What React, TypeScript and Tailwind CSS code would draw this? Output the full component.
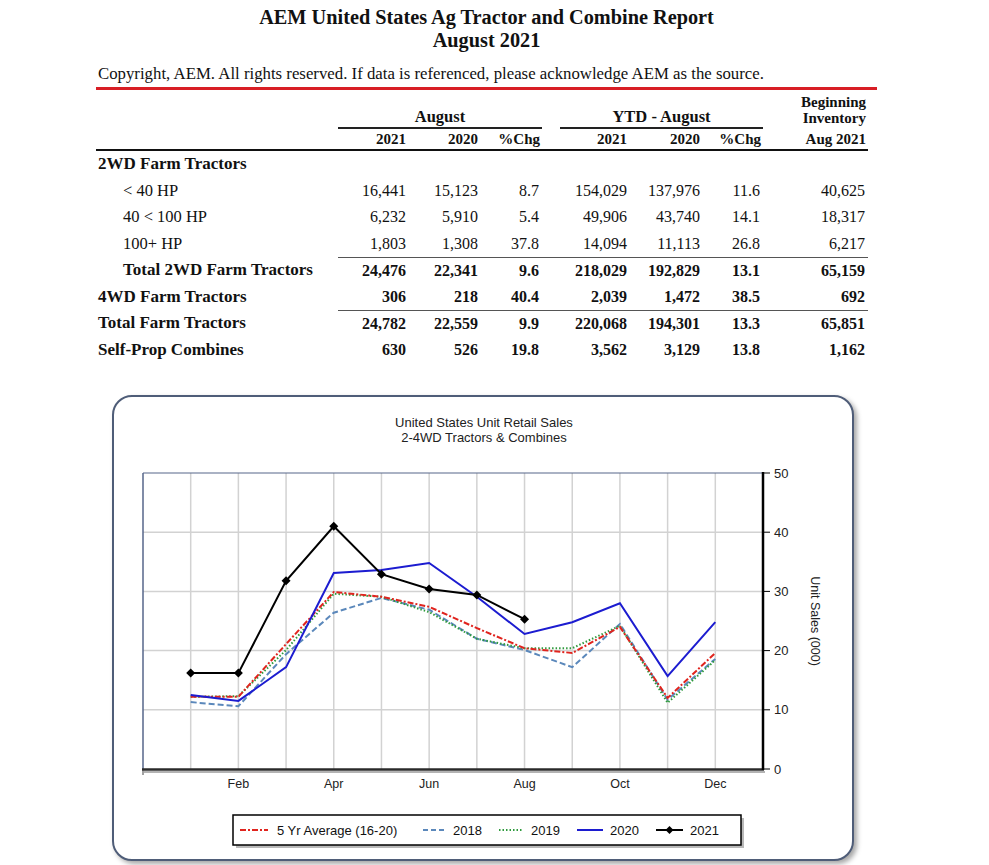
import React from "react"

const serif = { fontFamily: '"Liberation Serif", "Times New Roman", serif' }
const sans = '"Liberation Sans", Arial, sans-serif'

type Row = { label: string; indent?: boolean; bold?: boolean; vals?: string[]; lineTop?: boolean }

const ROWS: Row[] = [
  { label: "2WD Farm Tractors", bold: true },
  { label: "< 40 HP", indent: true, vals: ["16,441", "15,123", "8.7", "154,029", "137,976", "11.6", "40,625"] },
  { label: "40 < 100 HP", indent: true, vals: ["6,232", "5,910", "5.4", "49,906", "43,740", "14.1", "18,317"] },
  { label: "100+ HP", indent: true, vals: ["1,803", "1,308", "37.8", "14,094", "11,113", "26.8", "6,217"] },
  { label: "Total 2WD Farm Tractors", indent: true, bold: true, lineTop: true, vals: ["24,476", "22,341", "9.6", "218,029", "192,829", "13.1", "65,159"] },
  { label: "4WD Farm Tractors", bold: true, vals: ["306", "218", "40.4", "2,039", "1,472", "38.5", "692"] },
  { label: "Total Farm Tractors", bold: true, lineTop: true, vals: ["24,782", "22,559", "9.9", "220,068", "194,301", "13.3", "65,851"] },
  { label: "Self-Prop Combines", bold: true, vals: ["630", "526", "19.8", "3,562", "3,129", "13.8", "1,162"] },
]

const GRID = "grid grid-cols-[242px_68px_72px_64px_18px_67px_73px_63px_105px]"

const SERIES = {
  avg: [12.2, 12.2, 21.1, 29.9, 29.1, 27.4, 23.8, 20.4, 19.6, 24.0, 12.0, 19.6],
  y2018: [11.3, 10.6, 19.4, 26.4, 28.9, 26.9, 22.0, 20.1, 17.2, 24.5, 11.7, 18.6],
  y2019: [12.2, 12.3, 20.1, 29.6, 29.1, 26.5, 22.0, 20.4, 20.4, 24.2, 11.2, 18.4],
  y2020: [12.5, 11.5, 17.2, 33.1, 33.6, 34.8, 29.1, 22.8, 24.8, 28.0, 15.7, 24.8],
  y2021: [16.2, 16.2, 31.8, 41.0, 32.9, 30.4, 29.4, 25.3],
}

const X = (m: number) => 143 + m * (620 / 13)
const Y = (v: number) => 769 - v * 5.92
const pts = (d: number[]) => d.map((v, i) => `${X(i + 1)},${Y(v)}`).join(" ")
const diamond = (x: number, y: number, s = 4.5) => `${x},${y - s} ${x + s},${y} ${x},${y + s} ${x - s},${y}`

function NumCell({ v, bold, col }: { v?: string; bold?: boolean; col: number }) {
  const pr = col === 3 || col === 6 || col === 7 ? "pr-[3px]" : ""
  return <div className={`text-right ${pr} ${bold ? "font-bold" : ""}`}>{v}</div>
}

function Chart() {
  const months = [1, 2, 3, 4, 5, 6, 7, 8, 9, 10, 11, 12]
  return (
    <svg width={738} height={462} viewBox="114 397 738 462" style={{ fontFamily: sans }}>
      <text x={484} y={427} textAnchor="middle" fontSize={13} fill="#222">United States Unit Retail Sales</text>
      <text x={484} y={442} textAnchor="middle" fontSize={13} fill="#222">2-4WD Tractors &amp; Combines</text>

      <rect x={143} y={473} width={620} height={296} fill="#fff" />
      {months.map((m) => (
        <line key={m} x1={X(m)} y1={473} x2={X(m)} y2={769} stroke="#d2d2d2" strokeWidth={1.5} />
      ))}
      {[10, 20, 30, 40].map((v) => (
        <line key={v} x1={143} y1={Y(v)} x2={763} y2={Y(v)} stroke="#d2d2d2" strokeWidth={1.5} />
      ))}
      <line x1={143} y1={473} x2={763} y2={473} stroke="#56668a" strokeWidth={1.2} />
      <line x1={143} y1={473} x2={143} y2={770} stroke="#56668a" strokeWidth={1.5} />
      <line x1={144} y1={772} x2={765} y2={772} stroke="#9a9a9a" strokeWidth={1.5} />
      <line x1={142} y1={769.5} x2={764} y2={769.5} stroke="#2a2a2a" strokeWidth={2.5} />
      <line x1={763} y1={472} x2={763} y2={770} stroke="#000" strokeWidth={2.5} />
      <line x1={143} y1={770} x2={143} y2={775} stroke="#444" strokeWidth={1} />

      {[0, 10, 20, 30, 40, 50].map((v) => (
        <g key={v}>
          <line x1={763} y1={Y(v)} x2={770} y2={Y(v)} stroke="#000" strokeWidth={1} />
          <text x={774} y={Y(v) + 4.5} fontSize={13} fill="#222">{v}</text>
        </g>
      ))}
      {[["Feb", 2], ["Apr", 4], ["Jun", 6], ["Aug", 8], ["Oct", 10], ["Dec", 12]].map(([l, m]) => (
        <text key={l as string} x={X(m as number)} y={788} textAnchor="middle" fontSize={12.5} fill="#222">{l}</text>
      ))}
      <text transform="translate(811 621) rotate(90)" textAnchor="middle" fontSize={12.5} fill="#222">Unit Sales (000)</text>

      <polyline points={pts(SERIES.y2018)} fill="none" stroke="#5b88bb" strokeWidth={2} strokeDasharray="6 3" />
      <polyline points={pts(SERIES.y2019)} fill="none" stroke="#2e9a3c" strokeWidth={2} strokeDasharray="1.5 2" />
      <polyline points={pts(SERIES.avg)} fill="none" stroke="#e0241e" strokeWidth={2} strokeDasharray="6 2 2 2" />
      <polyline points={pts(SERIES.y2020)} fill="none" stroke="#1c1cd0" strokeWidth={2} />
      <polyline points={pts(SERIES.y2021)} fill="none" stroke="#000" strokeWidth={2} />
      {SERIES.y2021.map((v, i) => (
        <polygon key={i} points={diamond(X(i + 1), Y(v))} fill="#000" />
      ))}

      <rect x={236} y={818} width={508} height={30} fill="#8a8a8a" opacity={0.6} />
      <rect x={233} y={815} width={508} height={30} fill="#fff" stroke="#000" strokeWidth={1.5} />
      <line x1={240} y1={830} x2={268} y2={830} stroke="#e0241e" strokeWidth={2} strokeDasharray="6 2 2 2" />
      <text x={277} y={834.5} fontSize={13} fill="#111">5 Yr Average (16-20)</text>
      <line x1={423} y1={830} x2={447} y2={830} stroke="#5b88bb" strokeWidth={2} strokeDasharray="5 3" />
      <text x={453} y={834.5} fontSize={13} fill="#111">2018</text>
      <line x1={499} y1={830} x2={523} y2={830} stroke="#2e9a3c" strokeWidth={2} strokeDasharray="1.5 2" />
      <text x={531} y={834.5} fontSize={13} fill="#111">2019</text>
      <line x1={577} y1={830} x2={603} y2={830} stroke="#1c1cd0" strokeWidth={2} />
      <text x={610} y={834.5} fontSize={13} fill="#111">2020</text>
      <line x1={656} y1={830} x2={683} y2={830} stroke="#000" strokeWidth={2} />
      <polygon points={diamond(669.5, 830, 4)} fill="#000" />
      <text x={690} y={834.5} fontSize={13} fill="#111">2021</text>
    </svg>
  )
}

export default function App() {
  return (
    <div className="w-[989px] h-[865px] bg-white overflow-hidden text-[#111]" style={serif}>
      {/* Title */}
      <div className="pt-[6px] ml-[96px] w-[781px] text-center font-bold text-[20.3px] leading-[23px]">
        <div>AEM United States Ag Tractor and Combine Report</div>
        <div>August 2021</div>
      </div>
      <div className="mt-[12px] pl-[98px] text-[16.8px] leading-[20px]">
        Copyright, AEM. All rights reserved. If data is referenced, please acknowledge AEM as the source.
      </div>
      <div className="mt-[3px] ml-[96px] w-[781px] h-[3px] bg-[#d81e25]" />

      {/* Table */}
      <div className="ml-[96px] w-[772px]">
        <div className={`${GRID} text-[15px] font-bold`}>
          <div className="col-start-2 col-span-3 h-[39px] flex items-end justify-center border-b-2 border-[#222] pb-[2px] text-[16.5px] leading-[16px]">
            August
          </div>
          <div className="col-start-6 col-span-3 h-[39px] flex items-end justify-center border-b-2 border-[#222] pb-[2px] text-[16.5px] leading-[16px]">
            YTD - August
          </div>
          <div className="col-start-9 h-[39px] flex flex-col items-end justify-end pb-[3px] pr-[2px] leading-[16px]">
            <div>Beginning</div>
            <div>Inventory</div>
          </div>
        </div>
        <div className={`${GRID} h-[22px] items-center text-[15px] font-bold border-b-2 border-[#111] leading-[20px]`}>
          <div />
          <div className="text-right">2021</div>
          <div className="text-right">2020</div>
          <div className="text-right pr-[2px]">%Chg</div>
          <div />
          <div className="text-right">2021</div>
          <div className="text-right">2020</div>
          <div className="text-right pr-[2px]">%Chg</div>
          <div className="text-right pr-[2px]">Aug 2021</div>
        </div>

        {ROWS.map((r) => (
          <div key={r.label} className={`${GRID} h-[26.5px] items-center text-[16px] leading-[20px]`}>
            <div className={`${r.indent ? "pl-[27px]" : "pl-[2px]"} ${r.bold ? "font-bold text-[17px]" : "text-[16.5px]"}`}>{r.label}</div>
            {[0, 1, 2, 3, 4, 5, 6, 7].map((i) => {
              const idx = i < 3 ? i : i === 3 ? -1 : i - 1
              return (
                <div key={i} className={`h-full flex flex-col justify-center ${r.lineTop ? "border-t-[1.5px] border-[#555]" : ""}`}>
                  {idx >= 0 && r.vals ? <NumCell v={r.vals[idx]} bold={r.bold} col={idx + 1} /> : null}
                </div>
              )
            })}
          </div>
        ))}
      </div>

      {/* Chart */}
      <div className="mt-[32px] ml-[112px] w-[742px] h-[466px] border-2 border-[#4f5d78] rounded-[20px] shadow-[3px_3px_5px_rgba(0,0,0,0.35)] overflow-hidden bg-white">
        <Chart />
      </div>
    </div>
  )
}
